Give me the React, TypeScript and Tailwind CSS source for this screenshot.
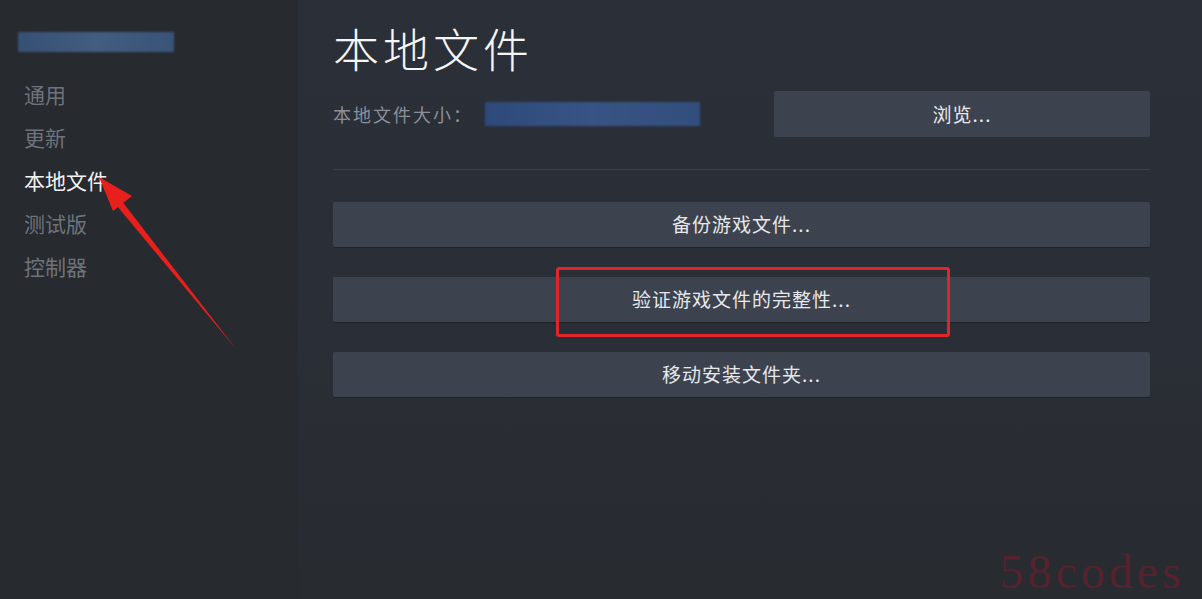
import React from "react";

const font = { fontFamily: '"Noto Sans CJK SC", "Noto Sans", sans-serif' };

function Btn({ label }: { label: string }) {
  return (
    <div className="h-[45px] w-full rounded-[2px] bg-[#3d434e] flex items-center justify-center text-[19px] tracking-[1px] text-[#e6e8ec] shadow-[0_1px_0_rgba(0,0,0,0.25)]">
      {label}
    </div>
  );
}

export default function App() {
  const nav = ["通用", "更新", "本地文件", "测试版", "控制器"];
  return (
    <div className="relative w-[1202px] h-[599px] overflow-hidden flex bg-[#282b30]" style={font}>
      <aside className="w-[298px] shrink-0 bg-[#272a2f] pt-[32px] pl-[18px]">
        <div className="w-[156px] h-[20px] bg-gradient-to-r from-[#3b5a86] via-[#4a6a95] to-[#3f5f8c] opacity-80 blur-[1px]" />
        <nav className="mt-[21px] pl-[6px] flex flex-col">
          {nav.map((n) => (
            <div
              key={n}
              className={
                "h-[43px] flex items-center text-[21px] " +
                (n === "本地文件" ? "text-[#f2f3f5]" : "text-[#6e737b]")
              }
            >
              {n}
            </div>
          ))}
        </nav>
      </aside>
      <main className="flex-1 bg-gradient-to-b from-[#2b2f38] via-[#2a2e36] to-[#282b30] pl-[35px] pr-[52px] pt-[18px]">
        <h1 className="text-[46px] leading-[58px] text-[#f4f5f7] tracking-[4px] font-light">本地文件</h1>
        <div className="mt-[15px] flex items-center h-[46px]">
          <span className="text-[18px] tracking-[2px] text-[#8b9099] w-[152px]">本地文件大小：</span>
          <div className="w-[215px] h-[24px] bg-gradient-to-r from-[#2f4f86] via-[#3b5b92] to-[#34548a] opacity-85 blur-[0.8px]" />
          <div className="ml-auto w-[376px] h-[46px] rounded-[2px] bg-[#3d434e] flex items-center justify-center text-[19px] tracking-[1px] text-[#e6e8ec]">
            浏览...
          </div>
        </div>
        <div className="mt-[32px] h-px bg-[#3a3f48]" />
        <div className="mt-[32px] flex flex-col gap-[30px]">
          <Btn label="备份游戏文件..." />
          <Btn label="验证游戏文件的完整性..." />
          <Btn label="移动安装文件夹..." />
        </div>
      </main>

      {/* red highlight box */}
      <div className="absolute left-[556px] top-[267px] w-[394px] h-[70px] border-[3px] border-[#e0262a] rounded-[3px]" />

      {/* red arrow */}
      <svg className="absolute left-0 top-0 pointer-events-none" width="1202" height="599">
        <polygon points="236,349 112,200 118,196" fill="#e8201c" />
        <polygon points="99,177 132,196 113,211" fill="#e8201c" />
      </svg>

      {/* watermark */}
      <div
        className="absolute left-[1000px] top-[536px] text-[48px] text-[#6a1f2c] opacity-70 tracking-[4px]"
        style={{ fontFamily: '"Liberation Serif", "DejaVu Serif", serif' }}
      >
        58codes
      </div>
    </div>
  );
}
